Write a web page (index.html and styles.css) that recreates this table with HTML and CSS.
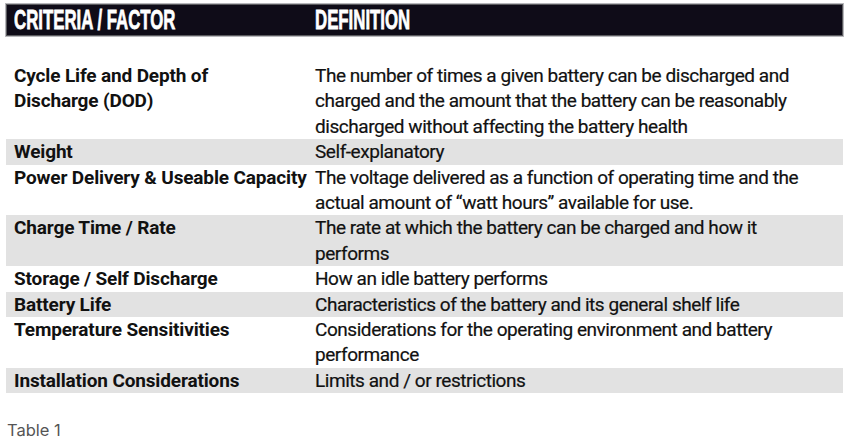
FILE: index.html
```html
<!DOCTYPE html>
<html>
<head>
<meta charset="utf-8">
<link rel="stylesheet" href="styles.css">
</head>
<body>
<div class="page">
  <div class="head">
    <div class="hcell"><span class="htxt">CRITERIA / FACTOR</span></div>
    <div class="hcell"><span class="htxt">DEFINITION</span></div>
  </div>
  <div class="rows">
    <div class="row"><div class="crit">Cycle Life and Depth of<br>Discharge (DOD)</div><div class="def">The number of times a given battery can be discharged and<br>charged and the amount that the battery can be reasonably<br>discharged without affecting the battery health</div></div>
    <div class="row alt"><div class="crit">Weight</div><div class="def">Self-explanatory</div></div>
    <div class="row"><div class="crit">Power Delivery &amp; Useable Capacity</div><div class="def">The voltage delivered as a function of operating time and the<br>actual amount of “watt hours” available for use.</div></div>
    <div class="row alt"><div class="crit">Charge Time / Rate</div><div class="def">The rate at which the battery can be charged and how it<br>performs</div></div>
    <div class="row"><div class="crit">Storage / Self Discharge</div><div class="def">How an idle battery performs</div></div>
    <div class="row alt"><div class="crit">Battery Life</div><div class="def">Characteristics of the battery and its general shelf life</div></div>
    <div class="row"><div class="crit">Temperature Sensitivities</div><div class="def">Considerations for the operating environment and battery<br>performance</div></div>
    <div class="row alt"><div class="crit">Installation Considerations</div><div class="def">Limits and / or restrictions</div></div>
  </div>
  <div class="caption">Table 1</div>
</div>
</body>
</html>
```

FILE: styles.css
```css
html, body {
  margin: 0;
  padding: 0;
  background: #ffffff;
}
.page {
  width: 837px;
  padding: 4px 0 0 6px;
}
.head {
  display: grid;
  grid-template-columns: 301px 1fr;
  height: 30px;
  background: #0f0c18;
  border: 1px solid #5a5a5e;
  box-shadow: 0 0 0 1px #b8b8bc;
  overflow: hidden;
}
.hcell {
  padding-left: 7px;
  display: flex;
  align-items: center;
}
.htxt {
  display: inline-block;
  font-family: "Liberation Sans", Arial, sans-serif;
  font-weight: bold;
  font-size: 28px;
  line-height: 30px;
  color: #ffffff;
  transform: scaleX(0.6);
  transform-origin: left center;
  white-space: nowrap;
  -webkit-text-stroke: 0.8px #ffffff;
}
.rows {
  margin-top: 27px;
}
.row {
  display: grid;
  grid-template-columns: 301px 1fr;
  font-family: Roboto, "Liberation Sans", sans-serif;
  font-size: 19px;
  line-height: 25.4px;
  color: #111111;
}
.row.alt {
  background: #e2e2e2;
}
.crit {
  padding-left: 8px;
  font-weight: bold;
  white-space: nowrap;
  letter-spacing: -0.15px;
}
.def {
  padding-left: 8px;
  white-space: nowrap;
  letter-spacing: -0.45px;
  -webkit-text-stroke: 0.2px #111111;
}
.caption {
  margin-top: 27px;
  padding-left: 1px;
  font-family: Inter, "Liberation Sans", sans-serif;
  font-size: 16.5px;
  line-height: 20px;
  color: #555555;
}
```
